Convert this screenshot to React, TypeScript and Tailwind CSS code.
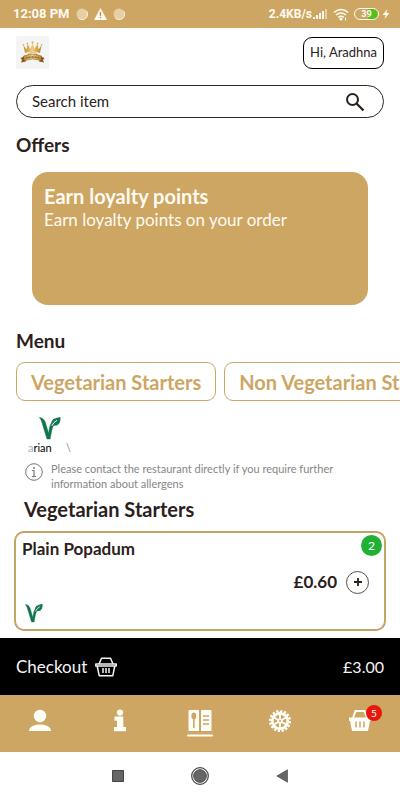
import React from "react";

function CrownLogo() {
  return (
    <svg viewBox="0 0 33 33" className="size-[33px] bg-[#f5f4f4]" role="img" aria-label="Restaurant logo">
      <defs>
        <linearGradient id="gold" x1="0" x2="1">
          <stop offset="0" stopColor="#c08a2c" />
          <stop offset=".5" stopColor="#f0cb78" />
          <stop offset="1" stopColor="#b98025" />
        </linearGradient>
      </defs>
      <path d="M9 17 7.500 9.500l3 4 1-5.500 3 5L16.500 7l2 6 3-5 1 5.500 3-4L24 17q-7.500-3-15 0Z" fill="url(#gold)" />
      <g fill="#cf9b3e">
        <circle cx="7.500" cy="9" r=".8" />
        <circle cx="11.500" cy="7.500" r=".8" />
        <circle cx="16.500" cy="6.500" r=".9" />
        <circle cx="21.500" cy="7.500" r=".8" />
        <circle cx="25.500" cy="9" r=".8" />
      </g>
      <path d="M12 19q1-3 3-2 1.500-1.500 3 0 2-1 3 2" fill="none" stroke="#d9a850" strokeWidth="1" />
      <path d="M8 20.500 4.500 22l1.500 2-1 2.500 5-1M25 20.500l3.500 1.500-1.500 2 1 2.500-5-1" fill="#8a5a1c" />
      <path d="M7.500 20q9-3.500 18 0l-.5 4.500q-8.500-3-17 0Z" fill="url(#gold)" stroke="#7b5423" strokeWidth=".5" />
      <path d="M10 22q6.500-2 13 0" fill="none" stroke="#805a2b" strokeWidth="1.300" strokeDasharray="1 .5" />
    </svg>
  );
}

function NoticeDot() {
  return (
    <svg viewBox="0 0 12 12" className="size-3" aria-hidden="true">
      <circle cx="6" cy="6" r="5.500" fill="#e7cfa5" />
      <path d="M2 9.500A5.300 5.300 0 0 0 10.500 3" fill="none" stroke="#fff0d5" strokeWidth="1" />
    </svg>
  );
}

function StatusBar() {
  return (
    <div className="flex h-7 items-center justify-between bg-[#cda664] pr-[10px] pl-[13px] font-[Roboto,sans-serif] text-[#fffaf0]">
      <div className="flex items-center gap-[6px]">
        <span className="text-[13px] font-bold">12:08 PM</span>
        <NoticeDot />
        <svg viewBox="0 0 13 12" className="h-3 w-[13px]" aria-hidden="true">
          <path d="M6.500 0 13 12H0Z" fill="#fffaf0" />
          <path d="M6.500 4v4M6.500 9v1.300" stroke="#b88e4d" strokeWidth="1.300" />
        </svg>
        <NoticeDot />
      </div>
      <div className="flex items-center">
        <span className="text-[12px] font-bold">2.4KB/s</span>
        <svg viewBox="0 0 16 12" className="h-3 w-4" aria-hidden="true">
          <path d="M2 11V9M5 11V7M8 11V5M11 11V3" stroke="#fffaf0" strokeWidth="2" />
          <path d="M14 11V1" stroke="#e6cfa4" strokeWidth="2" />
        </svg>
        <svg viewBox="0 0 16 13" className="ml-[5px] h-[13px] w-4" fill="none" stroke="#fffaf0" strokeWidth="1.600" aria-hidden="true">
          <path d="M.8 4.500q7.200-6 14.400 0M3 7q5-4 10 0M5.200 9.300q2.800-2.200 5.600 0" />
          <circle cx="8" cy="11" r=".8" fill="#fffaf0" />
          <path d="M12.500 9.500v3" strokeWidth="1" />
        </svg>
        <span className="ml-[5px] flex h-3 w-[25px] items-center justify-center rounded-full border border-[#fffaf0] bg-linear-to-r from-[#cda664] from-55% to-[#5abd1f] to-55% text-[9px] leading-none font-bold">
          39
        </span>
        <svg viewBox="0 0 8 10" className="ml-[3px] h-[10px] w-2" aria-hidden="true">
          <path d="M5.500 0 .5 6h3L2.500 10l5-6h-3Z" fill="#fffaf0" />
        </svg>
      </div>
    </div>
  );
}

function VeganLeaf({ className }: { className: string }) {
  return (
    <svg viewBox="0 0 22 24" className={className} role="img" aria-label="Vegetarian">
      <path d="M.5 1.500C4.500 2 6 4.500 7 8.500l2.600 9C10.300 12 11 8.500 13.300 5.800L16 7.500c-3 3.500-3.500 8-4.800 15.500H8L4 10C3 6.500 2.500 4 .5 1.500Z" fill="#12744a" stroke="#12744a" strokeWidth=".5" />
      <path d="M21.500 1c.3 6.500-2.300 9.500-8.200 8.600C10.500 4 15 2 21.500 1Z" fill="#16784e" />
      <path d="M12.800 9.800q2-3.800 5.200-5.500" fill="none" stroke="#fff" strokeWidth="1" />
    </svg>
  );
}

function CheckoutBasket() {
  return (
    <svg viewBox="0 0 22 20" className="h-5 w-[22px]" fill="none" stroke="#f4f4f4" strokeWidth="1.500" strokeLinejoin="round" aria-hidden="true">
      <path d="M4 7 6.500 1.200h9L18 7" />
      <path d="M.8 7h20.400v2H.8ZM2.200 9l2 9.700h13.600l2-9.700M8 11v5M11 11v5M14 11v5" />
    </svg>
  );
}

function PersonIcon() {
  return (
    <svg viewBox="0 0 24 24" className="size-6" fill="#fffdf8" aria-hidden="true">
      <circle cx="12" cy="7" r="6.200" />
      <path d="M1 22c0-4 5-6.500 11-6.500S23 18 23 22Z" />
    </svg>
  );
}

function InfoIcon() {
  return (
    <svg viewBox="0 0 24 24" className="size-6" fill="#fffdf8" aria-hidden="true">
      <circle cx="12" cy="3.600" r="3.100" />
      <path d="M6.500 7.500h8.800V18H18v4.300H6V18h3v-6.300H6.500Z" />
    </svg>
  );
}

function MenuIcon() {
  return (
    <svg viewBox="0 0 26 28" className="h-7 w-[26px]" aria-hidden="true">
      <path d="M2.500 1H11q1 0 1 1v20H2.500q-1 0-1-1V2q0-1 1-1ZM15 1h8.500q1 0 1 1v19q0 1-1 1H14V2q0-1 1-1Z" fill="#fffdf8" />
      <ellipse cx="6.800" cy="7" rx="2.400" ry="3.400" fill="#cda664" />
      <path d="M6.800 9v10M16 7h6M16 11h6M16 15h6" stroke="#cda664" strokeWidth="1.600" />
      <path d="M1 26.500h24" stroke="#fffdf8" strokeWidth="2" strokeLinecap="round" />
    </svg>
  );
}

function GearIcon() {
  return (
    <svg viewBox="0 0 24 24" className="size-6" fill="none" stroke="#fffdf8" aria-hidden="true">
      <circle cx="12" cy="12" r="9.800" strokeWidth="2.600" pathLength="32" strokeDasharray="1.200 .8" />
      <circle cx="12" cy="12" r="7.700" strokeWidth="2.800" />
      <path d="M12 5v14M5.900 8.500l12.200 7M18.100 8.500l-12.200 7" strokeWidth="1.800" />
      <circle cx="12" cy="12" r="2.700" fill="#fffdf8" stroke="none" />
      <circle cx="12" cy="12" r="1" fill="#cda664" stroke="none" />
    </svg>
  );
}

function BasketIcon() {
  return (
    <svg viewBox="0 0 24 24" className="size-6" aria-hidden="true">
      <path d="M5 9 7.500 2h9L19 9" fill="none" stroke="#fffdf8" strokeWidth="2" />
      <path d="M1 8.500h22V12h-1l-2 10H4L2 12H1Z" fill="#fffdf8" />
      <path d="M8 12.500v6M12 12.500v6M16 12.500v6" stroke="#cda664" strokeWidth="1.500" />
    </svg>
  );
}

const categories = ["Vegetarian Starters", "Non Vegetarian Starters"];

const tabs = [
  { label: "Account", icon: <PersonIcon /> },
  { label: "Information", icon: <InfoIcon /> },
  { label: "Menu", icon: <MenuIcon /> },
  { label: "Settings", icon: <GearIcon /> },
  { label: "Basket", icon: <BasketIcon />, badge: 5 },
];

export default function App() {
  return (
    <div className="flex min-h-screen flex-col overflow-x-hidden bg-white font-[Lato,sans-serif] text-[#2b211c]">
      <StatusBar />
      <header className="flex items-center justify-between px-4 pt-2">
        <CrownLogo />
        <button className="h-8 rounded-[9px] border border-black px-[6px] text-[13px]">Hi, Aradhna</button>
      </header>

      <main className="flex-1">
        <label className="mx-4 mt-4 flex h-[33px] items-center rounded-full border border-[#31271d] pr-[18px] pl-[15px]">
          <input
            type="text"
            aria-label="Search item"
            placeholder="Search item"
            className="min-w-0 flex-1 bg-transparent text-[15px] outline-none placeholder:text-[#2b211c] placeholder:opacity-100"
          />
          <svg viewBox="0 0 20 20" className="size-5" fill="none" stroke="#2b211c" aria-hidden="true">
            <circle cx="7.500" cy="7.500" r="5.500" strokeWidth="2" />
            <path d="m11.500 11.500 7 7" strokeWidth="2.300" />
          </svg>
        </label>

        <h2 className="mt-[15px] px-4 text-[19px] leading-6 font-bold">Offers</h2>
        <section className="mx-8 mt-[15px] h-[133px] rounded-[16px] bg-[#cda664] px-3 pt-3 text-[#fffaf0]">
          <h3 className="text-[20px] leading-6 font-bold">Earn loyalty points</h3>
          <p className="text-[17px] leading-6">Earn loyalty points on your order</p>
        </section>

        <h2 className="mt-6 px-4 text-[19px] leading-6 font-bold">Menu</h2>
        <div className="mt-[9px] flex gap-2 overflow-x-auto pl-4 [scrollbar-width:none]">
          {categories.map((name) => (
            <button key={name} className="h-[39px] shrink-0 rounded-[9px] border border-[#cda664] px-[14px] text-[20px] font-bold text-[#cda664]">
              {name}
            </button>
          ))}
        </div>

        <div className="mt-[15px] ml-7 flex w-[43px] flex-col items-center">
          <VeganLeaf className="h-6 w-[22px]" />
          <div className="flex w-full justify-between text-[11px] leading-4 text-black">
            <span>
              <span className="text-[#aaa]">a</span>rian
            </span>
            <span className="text-[#888]">\</span>
          </div>
        </div>

        <div className="mt-[5px] flex gap-2 px-[25px] text-[#868686]">
          <svg viewBox="0 0 18 18" className="mt-[2px] size-[18px] shrink-0" fill="none" stroke="#777" aria-hidden="true">
            <circle cx="9" cy="9" r="8.300" />
            <circle cx="9" cy="5" r="1" fill="#777" stroke="none" />
            <path d="M7 7.500h2v6M7 13.500h4" strokeWidth="1.200" />
          </svg>
          <p className="text-[11px] leading-[15px]">
            Please contact the restaurant directly if you require further information about allergens
          </p>
        </div>

        <h2 className="mt-[6px] px-6 text-[20px] leading-6 font-bold">Vegetarian Starters</h2>
        <article className="relative mx-[14px] mt-[10px] flex h-[100px] flex-col justify-between rounded-[10px] border-2 border-[#c5a365] px-[6px] pt-1 pb-[6px]">
          <h3 className="text-[17px] leading-6 font-bold">Plain Popadum</h3>
          <span className="absolute top-[2px] right-[2px] flex size-[21px] items-center justify-center rounded-full bg-[#20b133] text-[12px] text-white">
            2
          </span>
          <div className="flex items-center justify-end gap-[9px] pr-[9px]">
            <span className="text-[17px] leading-6 font-bold">£0.60</span>
            <button aria-label="Add Plain Popadum" className="flex size-[23px] items-center justify-center rounded-full border border-[#55504c]">
              <svg viewBox="0 0 8 8" className="size-2" stroke="#2b211c" strokeWidth="1.800" aria-hidden="true">
                <path d="M4 0v8M0 4h8" />
              </svg>
            </button>
          </div>
          <VeganLeaf className="ml-[3px] h-5 w-[18px]" />
        </article>
      </main>

      <footer className="mt-[7px]">
        <button className="flex h-[57px] w-full items-center bg-black px-4 text-[17px] text-[#f4f4f4]">
          <span className="mr-2">Checkout</span>
          <CheckoutBasket />
          <span className="ml-auto text-[16px]">£3.00</span>
        </button>
        <nav className="grid h-[57px] grid-cols-5 bg-[#cda664]">
          {tabs.map((tab) => (
            <button key={tab.label} aria-label={tab.label} className="flex items-start justify-center pt-[14px]">
              <span className="relative">
                {tab.icon}
                {tab.badge && (
                  <span className="absolute -top-1 left-[18px] flex size-4 items-center justify-center rounded-full bg-[#e8170c] text-[10px] text-white">
                    {tab.badge}
                  </span>
                )}
              </span>
            </button>
          ))}
        </nav>
        <nav className="flex h-12 items-center justify-center bg-white">
          <button aria-label="Recent apps" className="flex w-[82px] justify-center">
            <svg viewBox="0 0 12 12" className="size-3" aria-hidden="true">
              <path d="M.5.500h11v11H.5Z" fill="#666" stroke="#444" />
            </svg>
          </button>
          <button aria-label="Home" className="flex w-[82px] justify-center">
            <svg viewBox="0 0 18 18" className="size-[18px]" aria-hidden="true">
              <circle cx="9" cy="9" r="8.300" fill="none" stroke="#444" strokeWidth="1.200" />
              <circle cx="9" cy="9" r="6.300" fill="#666" stroke="#444" />
            </svg>
          </button>
          <button aria-label="Back" className="flex w-[82px] justify-center">
            <svg viewBox="0 0 12 14" className="h-[14px] w-3" aria-hidden="true">
              <path d="M.8 7 11.500.7v12.600Z" fill="#666" stroke="#444" strokeWidth=".6" />
            </svg>
          </button>
        </nav>
      </footer>
    </div>
  );
}
